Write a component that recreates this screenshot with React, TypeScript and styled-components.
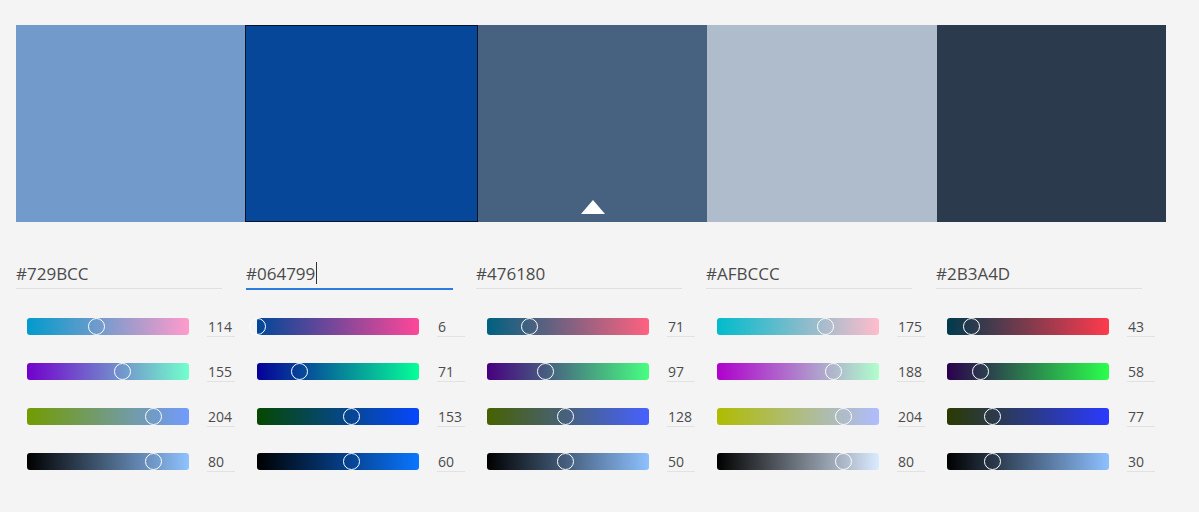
import React from "react";
import styled, { createGlobalStyle } from "styled-components";

const Global = createGlobalStyle`
  html, body { margin: 0; padding: 0; background: #f4f4f4; }
  body { font-family: "Open Sans", "Liberation Sans", sans-serif; }
`;

type RGB = [number, number, number];
const hexToRgb = (h: string): RGB => [
  parseInt(h.slice(1, 3), 16),
  parseInt(h.slice(3, 5), 16),
  parseInt(h.slice(5, 7), 16),
];
const css = (c: RGB) => `rgb(${c[0]}, ${c[1]}, ${c[2]})`;

const colors = ["#729BCC", "#064799", "#476180", "#AFBCCC", "#2B3A4D"];
const SELECTED = 1;
const widths = [229, 233, 229, 230, 229];
const BAR_W = 162;

const Page = styled.div`
  padding: 25px 0 0 16px;
  width: 1183px;
  height: 487px;
`;

const Swatches = styled.div`
  display: grid;
  grid-template-columns: ${widths.map((w) => w + "px").join(" ")};
  height: 197px;
`;

const Swatch = styled.div<{ $selected?: boolean }>`
  box-sizing: border-box;
  display: flex;
  justify-content: center;
  align-items: flex-end;
  padding-bottom: 8px;
  border: ${(p) => (p.$selected ? "1px solid #0b1426" : "none")};
`;

const Marker = styled.div`
  width: 0;
  height: 0;
  border-left: 12px solid transparent;
  border-right: 12px solid transparent;
  border-bottom: 14px solid #ffffff;
`;

const Controls = styled.div`
  display: grid;
  grid-template-columns: repeat(5, 230px);
  margin-top: 36px;
`;

const Column = styled.div`
  display: flex;
  flex-direction: column;
`;

const HexField = styled.div<{ $active?: boolean }>`
  width: 206px;
  height: 30px;
  display: flex;
  align-items: center;
  font-size: 17px;
  color: #4b4b4b;
  border-bottom: ${(p) => (p.$active ? "2px solid #2c7be0" : "1px solid #e0e0e0")};
  margin-bottom: ${(p) => (p.$active ? "14px" : "15px")};
  ${(p) => (p.$active ? "width: 207px;" : "")}
`;

const Caret = styled.span`
  display: inline-block;
  width: 1px;
  height: 22px;
  background: #333;
  margin-left: 1px;
`;

const SliderRow = styled.div`
  display: flex;
  align-items: center;
  height: 45px;
  padding-left: 11px;
`;

const Track = styled.div`
  position: relative;
  width: ${BAR_W}px;
  height: 17px;
  border-radius: 3px;
`;

const Thumb = styled.div`
  position: absolute;
  top: 50%;
  width: 17px;
  height: 17px;
  margin-top: -8.5px;
  margin-left: -8.5px;
  box-sizing: border-box;
  border-radius: 50%;
  border: 1.5px solid #ffffff;
`;

const Value = styled.div`
  box-sizing: border-box;
  margin-left: 18px;
  width: 28px;
  height: 20px;
  padding-left: 1px;
  border-bottom: 1px solid #e2e2e2;
  font-size: 14px;
  line-height: 19px;
  color: #4b4b4b;
`;

type Slider = { value: number; max: number; from: RGB; to: RGB };

const slidersFor = (hex: string): Slider[] => {
  const [r, g, b] = hexToRgb(hex);
  const m = Math.max(r, g, b);
  const k = m === 0 ? 0 : 255 / m;
  return [
    { value: r, max: 255, from: [0, g, b], to: [255, g, b] },
    { value: g, max: 255, from: [r, 0, b], to: [r, 255, b] },
    { value: b, max: 255, from: [r, g, 0], to: [r, g, 255] },
    {
      value: Math.round((m / 255) * 100),
      max: 100,
      from: [0, 0, 0],
      to: [Math.round(r * k), Math.round(g * k), Math.round(b * k)],
    },
  ];
};

export default function App() {
  return (
    <>
      <Global />
      <Page>
        <Swatches>
          {colors.map((c, i) => (
            <Swatch key={c} $selected={i === SELECTED} style={{ background: c }}>
              {i === 2 && <Marker />}
            </Swatch>
          ))}
        </Swatches>
        <Controls>
          {colors.map((c, i) => (
            <Column key={c}>
              <HexField $active={i === SELECTED}>
                {c}
                {i === SELECTED && <Caret />}
              </HexField>
              {slidersFor(c).map((s, j) => (
                <SliderRow key={j}>
                  <Track
                    style={{
                      background: `linear-gradient(to right, ${css(s.from)}, ${css(s.to)})`,
                    }}
                  >
                    <Thumb style={{ left: (s.value / s.max) * BAR_W - 3 }} />
                  </Track>
                  <Value>{s.value}</Value>
                </SliderRow>
              ))}
            </Column>
          ))}
        </Controls>
      </Page>
    </>
  );
}
